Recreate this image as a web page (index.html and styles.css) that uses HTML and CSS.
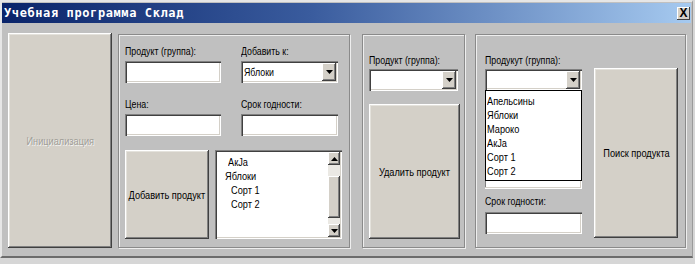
FILE: index.html
```html
<!DOCTYPE html>
<html lang="ru">
<head>
    <meta charset="UTF-8">
    <title>Учебная программа Склад</title>
    <link rel="stylesheet" href="styles.css">
</head>
<body>

    <!-- Main window -->
    <div class="window">
        <div class="titlebar">
            <span class="title">Учебная программа Склад</span>
            <span class="close-btn">X</span>
        </div>

        <div class="client">
            <div class="btn btn-init"><span class="t">Инициализация</span></div>

            <!-- Add product group -->
            <div class="group group-add">
                <div class="field-grid">
                    <div class="field">
                        <div class="label"><span class="t">Продукт (группа):</span></div>
                        <div class="edit"></div>
                    </div>
                    <div class="field">
                        <div class="label"><span class="t">Добавить к:</span></div>
                        <div class="combo">
                            <span class="combo-value"><span class="t">Яблоки</span></span>
                            <span class="arrow-btn"><svg width="7" height="4" viewBox="0 0 7 4"><polygon points="0,0 7,0 3.5,4" fill="#000"/></svg></span>
                        </div>
                    </div>
                    <div class="field">
                        <div class="label"><span class="t">Цена:</span></div>
                        <div class="edit"></div>
                    </div>
                    <div class="field">
                        <div class="label"><span class="t">Срок годности:</span></div>
                        <div class="edit"></div>
                    </div>
                </div>

                <div class="bottom-row">
                    <div class="btn btn-add"><span class="t">Добавить продукт</span></div>
                    <div class="listbox">
                        <ul class="items tree-items">
                            <li class="lvl-a"><span class="t">АкJa</span></li>
                            <li class="lvl-0"><span class="t">Яблоки</span></li>
                            <li class="lvl-1"><span class="t">Сорт 1</span></li>
                            <li class="lvl-1"><span class="t">Сорт 2</span></li>
                        </ul>
                        <div class="scrollbar">
                            <span class="arrow-btn sb-btn"><svg width="7" height="4" viewBox="0 0 7 4"><polygon points="0,4 7,4 3.5,0" fill="#000"/></svg></span>
                            <div class="sb-track sb-track-top"></div>
                            <div class="sb-thumb"></div>
                            <div class="sb-track"></div>
                            <span class="arrow-btn sb-btn"><svg width="7" height="4" viewBox="0 0 7 4"><polygon points="0,0 7,0 3.5,4" fill="#000"/></svg></span>
                        </div>
                    </div>
                </div>
            </div>

            <!-- Delete product group -->
            <div class="group group-del">
                <div class="label"><span class="t">Продукт (группа):</span></div>
                <div class="combo combo-del">
                    <span class="combo-value"></span>
                    <span class="arrow-btn"><svg width="7" height="4" viewBox="0 0 7 4"><polygon points="0,0 7,0 3.5,4" fill="#000"/></svg></span>
                </div>
                <div class="btn btn-del"><span class="t">Удалить продукт</span></div>
            </div>

            <!-- Find product group -->
            <div class="group group-find">
                <div class="find-col">
                    <div class="label"><span class="t">Продукут (группа):</span></div>
                    <div class="combo combo-find">
                        <span class="combo-value"></span>
                        <span class="arrow-btn"><svg width="7" height="4" viewBox="0 0 7 4"><polygon points="0,0 7,0 3.5,4" fill="#000"/></svg></span>
                    </div>
                    <div class="drop-wrap">
                        <ul class="items drop-list">
                            <li><span class="t">Апельсины</span></li>
                            <li><span class="t">Яблоки</span></li>
                            <li><span class="t">Мароко</span></li>
                            <li><span class="t">АкJa</span></li>
                            <li><span class="t">Сорт 1</span></li>
                            <li><span class="t">Сорт 2</span></li>
                        </ul>
                    </div>
                    <div class="label label-date"><span class="t">Срок годности:</span></div>
                    <div class="edit edit-date"></div>
                </div>
                <div class="btn btn-find"><span class="t">Поиск продукта</span></div>
            </div>
        </div>
    </div>

</body>
</html>
```

FILE: styles.css
```css
/* page + window frame */
body {
    margin: 0;
    background-color: #d6d6d6;
    font-family: "Liberation Sans", Arial, sans-serif;
    font-size: 11px;
    color: #000;
}

/* narrow system font look */
.t {
    display: inline-block;
    white-space: nowrap;
    transform: scaleX(0.8);
    transform-origin: left center;
}

.window {
    width: 693px;
    height: 258px;
    box-sizing: border-box;
    background-color: #c0c0c0;
    border-top: 2px solid #e6e6e6;
    border-left: 2px solid #e6e6e6;
    border-right: 1px solid #9a9a9a;
    border-bottom: 2px solid #6c6c6c;
    padding-top: 1px;
}

.titlebar {
    height: 20px;
    margin-right: 1px;
    display: flex;
    align-items: center;
    justify-content: space-between;
    padding: 0 1px 0 2px;
    background: linear-gradient(to right, #0a246a 0%, #3a5c9e 45%, #a6caf0 100%);
}

.title {
    font-family: "DejaVu Sans Mono", monospace;
    font-weight: bold;
    font-size: 12px;
    letter-spacing: 0.6px;
    color: #fff;
}

.close-btn {
    width: 13px;
    height: 13px;
    box-sizing: border-box;
    background-color: #d4d0c8;
    box-shadow: inset -1px -1px #404040, inset 1px 1px #fff;
    font-weight: bold;
    font-size: 12px;
    line-height: 13px;
    text-align: center;
}

.client {
    display: flex;
    align-items: flex-start;
    padding: 10px 0 0 6px;
}

/* buttons */
.btn {
    box-sizing: border-box;
    display: flex;
    align-items: center;
    justify-content: center;
    text-align: center;
    font-size: 11.5px;
    background-color: #d4d0c8;
    box-shadow: inset -1px -1px #404040, inset 1px 1px #fff, inset -2px -2px #808080, inset 2px 2px #e4e2dc;
}

.btn .t {
    transform-origin: center center;
}

.btn-init {
    width: 104px;
    height: 215px;
    color: #a09e98;
    text-shadow: 1px 1px 0 #f4f4f4;
}

/* group boxes */
.group {
    box-sizing: border-box;
    height: 214px;
    margin-top: 1px;
    border: 1px solid #8a8a8a;
    box-shadow: inset 1px 1px 0 #eee, 1px 1px 0 #eee;
}

.label {
    height: 14px;
    line-height: 14px;
    white-space: nowrap;
}

.edit,
.combo {
    box-sizing: border-box;
    height: 22px;
    margin-top: 3px;
    background-color: #fff;
    box-shadow: inset 1px 1px #808080, inset 2px 2px #404040, inset -1px -1px #fff, inset -2px -2px #d4d0c8;
}

.combo {
    display: flex;
    align-items: center;
    justify-content: space-between;
    padding: 2px;
}

.combo-value {
    padding-left: 1px;
}

.arrow-btn {
    width: 14px;
    height: 18px;
    box-sizing: border-box;
    display: flex;
    align-items: center;
    justify-content: center;
    background-color: #d4d0c8;
    box-shadow: inset -1px -1px #404040, inset 1px 1px #fff, inset -2px -2px #808080;
}

/* add group */
.group-add {
    width: 232px;
    margin-left: 6px;
    padding: 9px 0 0 6px;
}

.field-grid {
    display: grid;
    grid-template-columns: 96px 97px;
    column-gap: 20px;
    row-gap: 14px;
}

.bottom-row {
    display: flex;
    gap: 6px;
    margin-top: 14px;
}

.btn-add {
    width: 84px;
    height: 89px;
}

.listbox {
    box-sizing: border-box;
    width: 127px;
    height: 89px;
    padding: 2px;
    display: flex;
    background-color: #fff;
    box-shadow: inset 1px 1px #808080, inset 2px 2px #404040, inset -1px -1px #fff, inset -2px -2px #d4d0c8;
}

.items {
    list-style: none;
    margin: 0;
    padding: 0;
    font-size: 11.5px;
}

.items li {
    height: 14px;
    line-height: 14px;
    white-space: nowrap;
}

.tree-items {
    flex: 1;
    padding-top: 3px;
}

.lvl-a { padding-left: 11px; }
.lvl-0 { padding-left: 8px; }
.lvl-1 { padding-left: 14px; }

.scrollbar {
    width: 12px;
    display: flex;
    flex-direction: column;
}

.sb-btn {
    width: 12px;
    height: 13px;
}

.sb-track {
    height: 6px;
    background-color: #ebe9e4;
}

.sb-track-top {
    height: 11px;
}

.sb-thumb {
    flex: 1;
    background-color: #d4d0c8;
    box-shadow: inset -1px -1px #404040, inset 1px 1px #fff, inset -2px -2px #808080;
}

/* delete group */
.group-del {
    width: 103px;
    margin-left: 12px;
    padding: 18px 0 0 6px;
}

.combo-del {
    width: 89px;
    margin-top: 2px;
}

.btn-del {
    width: 91px;
    height: 135px;
    margin-top: 13px;
}

/* find group */
.group-find {
    width: 211px;
    margin-left: 10px;
    display: flex;
    gap: 12px;
    padding: 18px 0 0 9px;
}

.find-col {
    width: 97px;
}

.combo-find {
    height: 21px;
    margin-top: 2px;
}

.drop-wrap {
    height: 99px;
    background-color: #fff;
    box-shadow: inset -1px -1px #fff, inset -2px -2px #d4d0c8, inset 1px 0 #808080;
}

.drop-list {
    box-sizing: border-box;
    height: 91px;
    border: 1px solid #000;
    padding: 3px 0 0 1px;
    background-color: #fff;
}

.label-date {
    margin-top: 5px;
}

.edit-date {
    margin-top: 4px;
}

.btn-find {
    width: 84px;
    height: 170px;
    margin-top: 15px;
}
```
